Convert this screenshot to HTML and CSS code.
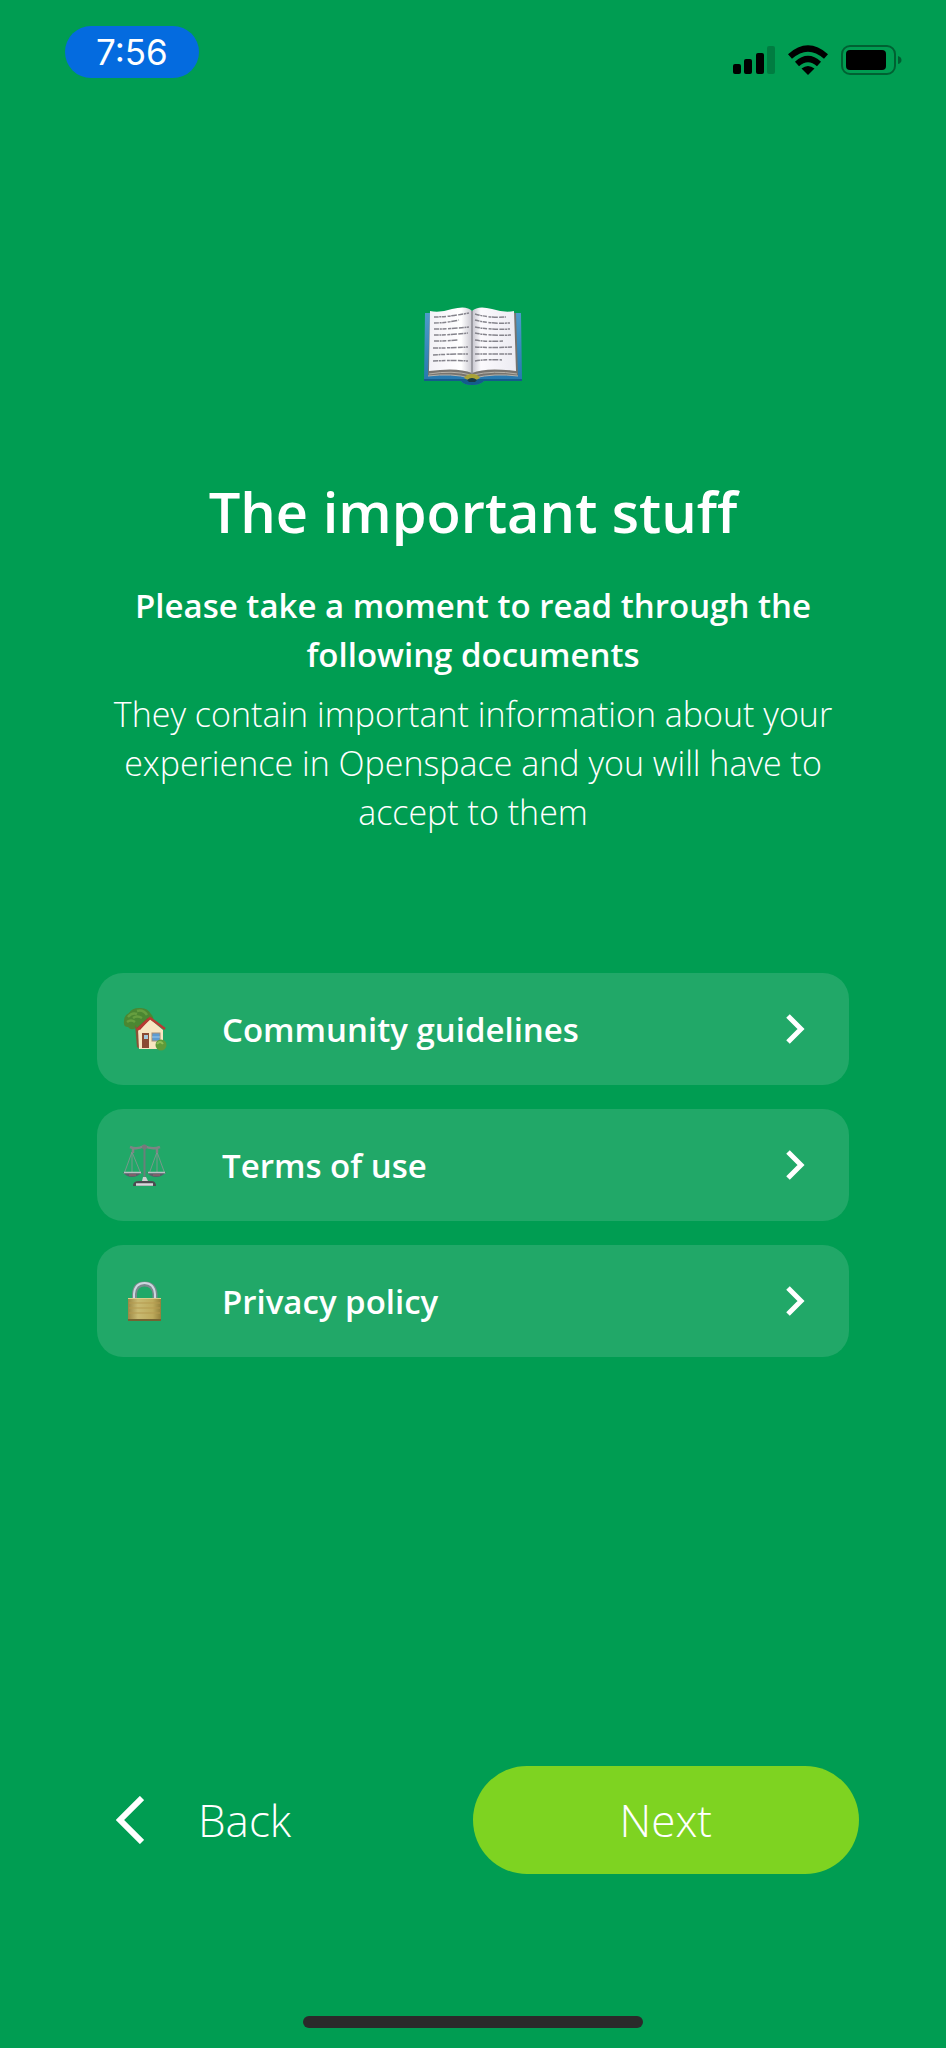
FILE: index.html
```
<!DOCTYPE html>
<html lang="en">
<head>
<meta charset="utf-8">
<meta name="viewport" content="width=device-width, initial-scale=1">
<title>The important stuff</title>
<link rel="stylesheet" href="styles.css">
</head>
<body>
<div class="screen">
  <header class="status">
    <time class="status-time">7:56</time>
    <div class="status-icons">
      <svg width="42" height="30" viewBox="0 0 42 30" aria-hidden="true">
        <rect x="0" y="19" width="8" height="10" rx="2"/>
        <rect x="11" y="14" width="8" height="15" rx="2"/>
        <rect x="23" y="8" width="8" height="21" rx="2"/>
        <rect x="34" y="1" width="8" height="28" rx="2" opacity=".2"/>
      </svg>
      <svg width="40" height="30" viewBox="0 0 40 30" aria-hidden="true">
        <g fill="none" stroke="#000" stroke-width="6">
          <path d="M2 11.500Q20-4.500 38 11.500"/>
          <path d="M9 19Q20 9 31 19"/>
        </g>
        <path d="M13.500 23.500Q20 18.500 26.500 23.500L20 30Z"/>
      </svg>
      <svg width="61" height="30" viewBox="0 0 61 30" aria-hidden="true">
        <rect x="1" y="1" width="53" height="28" rx="8" fill="none" stroke="#000" stroke-opacity=".38" stroke-width="2"/>
        <rect x="5" y="5" width="40" height="20" rx="4"/>
        <path d="M57 11q3.500 1 3.500 4t-3.500 4z" opacity=".4"/>
      </svg>
    </div>
  </header>

  <main class="content">
    <svg class="book" width="98" height="78" viewBox="0 0 98 78" aria-hidden="true">
      <defs>
        <linearGradient id="pageL" x1="0" x2="1"><stop offset="0" stop-color="#f2f1f6"/><stop offset=".75" stop-color="#fff"/><stop offset="1" stop-color="#c9c8d0"/></linearGradient>
        <linearGradient id="pageR" x1="0" x2="1"><stop offset="0" stop-color="#c4c3cc"/><stop offset=".2" stop-color="#fbfafd"/><stop offset="1" stop-color="#ecebf2"/></linearGradient>
        <linearGradient id="cover" x1="0" y1="0" x2="0" y2="1"><stop offset="0" stop-color="#4d9bc9"/><stop offset="1" stop-color="#2476ad"/></linearGradient>
      </defs>
      <path d="M1 6H97L98 74H60Q56 78 48 78T37 74H0Z" fill="url(#cover)"/>
      <path d="M0 72H98V74H60Q56 78 48 78T37 74H0Z" fill="#145b8d"/>
      <path d="M6 6 4 69Q28 66 48 71Q68 66 94 69L92 6Z" fill="#77746f"/>
      <path d="M5 67Q28 63 47 68M93 67Q70 63 49 68M4 69Q28 66 46 71M94 69Q70 66 50 71" stroke="#b5b1a8" fill="none"/>
      <path d="M6 4Q16 6 28 2Q43-2 48 4V66Q34 60 5 64Z" fill="url(#pageL)"/>
      <path d="M48 4Q54-2 68 2Q81 6 90 4L92 64Q62 60 48 66Z" fill="url(#pageR)"/>
      <path d="M48 4V67" stroke="#8a8a90" stroke-width="1.500"/>
      <path d="M40 71Q42 67 48 67T56 71L52 73Q48 70 44 73Z" fill="#a9a338"/>
      <path d="M43 73Q48 69 53 73L51 75H45Z" fill="#173b43"/>
      <g fill="none" stroke="#85848c" stroke-width="1.500" stroke-dasharray="5 .7 2 .6 4 1.500 3 .6 6 1.300">
        <path d="M10 10Q24 10 45 6M10 16Q22 16 35 13M10 22Q28 22 45 20M10 28Q26 28 44 26M10 34Q22 34 34 33M9 41Q27 41 44 40M9 48Q26 47 44 47M9 54Q28 53 44 54"/>
        <path d="M51 7Q64 11 82 10M51 13Q65 17 86 16M51 20Q67 23 86 22M51 26Q66 29 87 28M51 33Q64 35 79 34M51 40Q66 41 88 40M51 47Q66 47 88 47M51 54Q64 52 78 53"/>
      </g>
    </svg>

    <h1 class="title">The important stuff</h1>
    <p class="lead">Please take a moment to read through the following documents</p>
    <p class="detail">They contain important information about your experience in Openspace and you will have to accept to them</p>

    <nav class="documents" aria-label="Documents">
      <a class="document" href="#guidelines">
        <svg width="44" height="44" viewBox="0 0 44 44" aria-hidden="true">
          <path d="M13 21Q8 24 5 20Q0 20 1 14Q1 8 6 6Q9 1 16 1Q24 0 28 7Q33 12 27 18Q20 24 13 21Z" fill="#4b8732"/>
          <path d="M5 10Q9 5 14 7M14 4Q20 2 24 8M4 15Q8 12 12 15M10 11Q14 8 19 11" fill="none" stroke="#669e3f" stroke-width="2.500"/>
          <path d="M12 18 16 24 17 42 14 40Z" fill="#875236"/>
          <path d="M15 22 27 12 40 23V42H16Z" fill="#f8e5c1"/>
          <path d="M14 21 25 11 27 12 17 23Z" fill="#a52e27"/>
          <path d="M14 23 27 11 42 22" fill="none" stroke="#b83a32" stroke-width="2.500"/>
          <rect x="19" y="26" width="7" height="15" fill="#8b4a34"/>
          <rect x="21" y="28" width="4" height="4" fill="#a5c9df"/>
          <rect x="29" y="26" width="8" height="8" fill="#5d9bd2" stroke="#a68d76"/>
          <path d="M29 30h8" stroke="#9bc8eb"/>
          <circle cx="38" cy="38" r="5.500" fill="#609b39"/>
          <path d="M34 37q3-4 6 0" stroke="#8fbd55" fill="none" stroke-width="2"/>
        </svg>
        <span class="document-name">Community guidelines</span>
        <svg class="chevron" width="19" height="30" viewBox="0 0 19 30" aria-hidden="true"><path d="M2 2 15 15 2 28"/></svg>
      </a>
      <a class="document" href="#terms">
        <svg width="44" height="44" viewBox="0 0 44 44" aria-hidden="true">
          <path d="M9 9 1 31M9 9 18 31M34 9 26 31M34 9 42 31M9 9V31M34 9V31" fill="none" stroke="#8d9494" stroke-width=".8"/>
          <path d="M7 4Q14 7 21 3Q29 7 37 4M10 6V10M34 6V10" fill="none" stroke="#7d8584" stroke-width="2.500"/>
          <path d="M21.500 2V37" stroke="#69807a" stroke-width="2"/>
          <circle cx="21.500" cy="4" r="2.500" fill="#76787b"/>
          <path d="M0 29H19Q15 34 9 34T0 29ZM24 29H43Q39 34 33 34T24 29Z" fill="#58606a"/>
          <path d="M1 29.500H18M25 29.500H42" stroke="#b9c2c3" stroke-width="1.500"/>
          <path d="M6 32H13M30 32H37" stroke="#a56169"/>
          <path d="M19 38 20 34H23L25 38Z" fill="#d0d0d2"/>
          <path d="M10 43Q10 38 16 38H28Q33 38 33 43Z" fill="#4c4b51"/>
          <path d="M13 41.500H30" stroke="#d8d8dc" stroke-width="2.500"/>
        </svg>
        <span class="document-name">Terms of use</span>
        <svg class="chevron" width="19" height="30" viewBox="0 0 19 30" aria-hidden="true"><path d="M2 2 15 15 2 28"/></svg>
      </a>
      <a class="document" href="#privacy">
        <svg width="44" height="44" viewBox="0 0 44 44" aria-hidden="true">
          <defs>
            <linearGradient id="brass" x1="0" x2="1"><stop offset="0" stop-color="#9c8744"/><stop offset=".3" stop-color="#c9ba72"/><stop offset=".75" stop-color="#bdaa5c"/><stop offset="1" stop-color="#93803b"/></linearGradient>
          </defs>
          <path d="M11.500 20V15Q12 5 21.500 5T32 15V20" fill="none" stroke="#798a8d" stroke-width="5"/>
          <path d="M11 20V15Q12 4 21.500 4T32 15V20" fill="none" stroke="#ced6df" stroke-width="2"/>
          <rect x="5" y="19" width="33" height="23" rx="1" fill="url(#brass)"/>
          <path d="M6 24H37M6 29H37M6 34H37" stroke="#b69b50" stroke-width="1"/>
          <path d="M5 19.500H38" stroke="#ddcf8c"/>
          <path d="M5 41H38" stroke="#756331" stroke-width="2"/>
        </svg>
        <span class="document-name">Privacy policy</span>
        <svg class="chevron" width="19" height="30" viewBox="0 0 19 30" aria-hidden="true"><path d="M2 2 15 15 2 28"/></svg>
      </a>
    </nav>
  </main>

  <footer class="actions">
    <button class="back" type="button">
      <svg width="28" height="48" viewBox="0 0 28 48" aria-hidden="true"><path d="M26 2 4 24 26 46" fill="none" stroke="#fff" stroke-width="6"/></svg>
      <span>Back</span>
    </button>
    <button class="next" type="button">Next</button>
  </footer>
  <div class="home-bar"></div>
</div>
</body>
</html>
```
FILE: styles.css
```
* {
  box-sizing: border-box;
}

body {
  margin: 0;
  background: #009d52;
  color: #fff;
  font-family: "Open Sans", "Noto Sans", sans-serif;
}

h1,
p {
  margin: 0;
}

.screen {
  display: flex;
  flex-direction: column;
  min-height: 100vh;
}

.status {
  display: flex;
  justify-content: space-between;
  padding: 26px 44px 0 65px;
}

.status-time {
  padding: 0 31px;
  border-radius: 26px;
  background: #046bdf;
  font: 400 35px/52px Inter, sans-serif;
}

.status-icons {
  display: flex;
  gap: 13px;
  padding-top: 19px;
}

.content {
  display: flex;
  flex-direction: column;
  align-items: center;
  padding: 229px 97px 0;
}

.title {
  margin-top: 84px;
  font-size: 56px;
  font-weight: 600;
  line-height: 84px;
  text-align: center;
}

.lead,
.detail {
  max-width: 752px;
  line-height: 49px;
  text-align: center;
}

.lead {
  margin-top: 28px;
  font-size: 33px;
  font-weight: 600;
}

.detail {
  margin-top: 11px;
  font-size: 34px;
  font-weight: 350;
}

.documents {
  display: flex;
  flex-direction: column;
  gap: 24px;
  width: 100%;
  margin-top: 136px;
}

.document {
  display: flex;
  align-items: center;
  min-height: 112px;
  padding: 0 44px 0 26px;
  border-radius: 26px;
  background: #21a868;
  color: inherit;
  text-decoration: none;
}

.document-name {
  flex: 1;
  padding-left: 55px;
  font-size: 33px;
  font-weight: 600;
}

.chevron {
  fill: none;
  stroke: #fff;
  stroke-width: 5;
}

.actions {
  display: flex;
  align-items: center;
  justify-content: space-between;
  margin-top: auto;
  padding: 0 87px 142px 116px;
}

.back,
.next {
  border: 0;
  color: inherit;
  font-family: inherit;
  font-size: 44px;
  font-weight: 300;
  line-height: 60px;
  cursor: pointer;
}

.back {
  display: flex;
  align-items: center;
  gap: 54px;
  padding: 0;
  background: none;
}

.next {
  width: 52%;
  padding: 24px;
  border-radius: 56px;
  background: #7ed321;
}

.home-bar {
  width: 36%;
  height: 12px;
  margin: 0 auto 20px;
  border-radius: 6px;
  background: #2a2a2a;
}
```
